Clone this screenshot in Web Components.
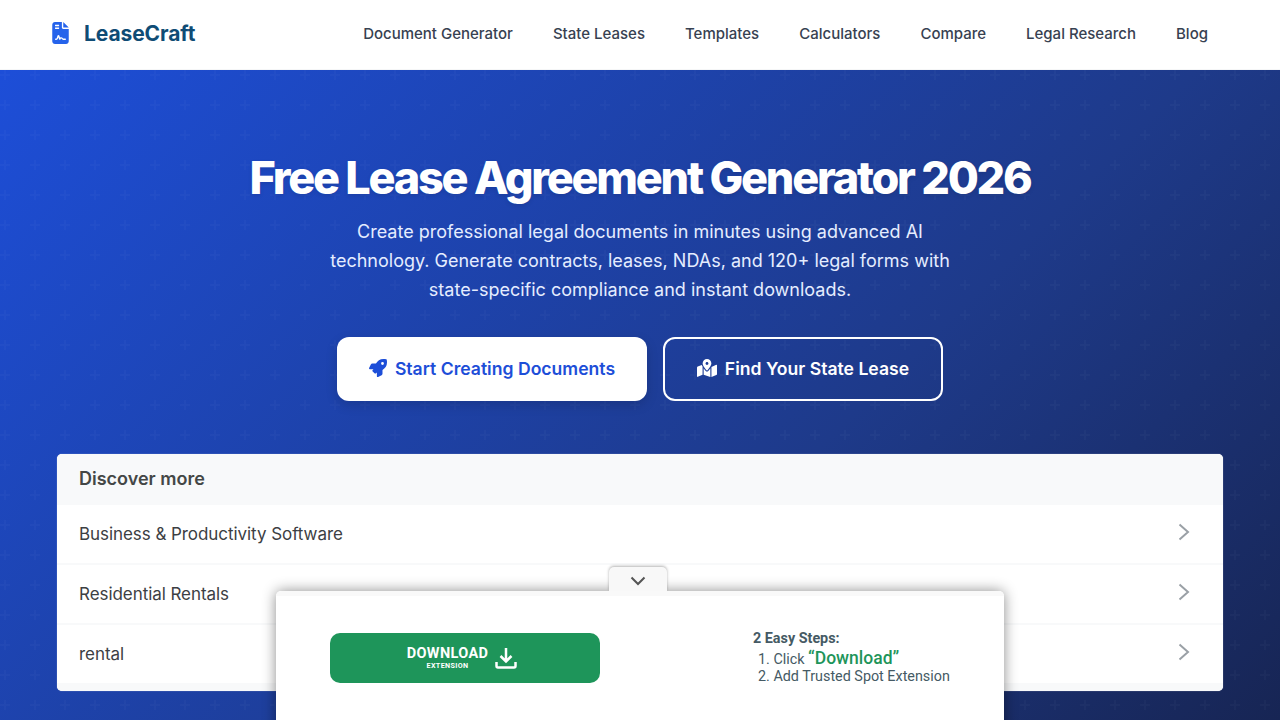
<!DOCTYPE html>
<html lang="en"><head><meta charset="utf-8"><title>LeaseCraft</title>
<style>
html,body{margin:0;padding:0;height:720px;overflow:hidden;background:#fff;font-family:Inter,"Liberation Sans",sans-serif}
</style></head><body>
<site-header></site-header>
<hero-section>
  <ad-list></ad-list>
</hero-section>
<download-widget></download-widget>
<script>
function def(name, html){
  customElements.define(name, class extends HTMLElement{
    constructor(){super();this.attachShadow({mode:'open'}).innerHTML=html;}
  });
}
const plus = encodeURIComponent('<svg xmlns="http://www.w3.org/2000/svg" width="30" height="30"><path d="M5 0v10M0 5h10" stroke="#fff" stroke-opacity=".022" stroke-width="2" fill="none"/></svg>');
def('site-header',`<style>
:host{display:flex;height:70px;box-sizing:border-box;align-items:center;justify-content:space-between;padding:0 52px 3px 52px;background:#fff;border-bottom:1px solid #f5f6f7;font-family:Inter,sans-serif}
.logo{display:flex;align-items:center;gap:15px;font-weight:700;font-size:21px;color:#0f4c75;letter-spacing:-.1px}
.logo span{margin-top:1px}
nav{display:flex;gap:40px;padding-right:20px}
a{font-size:15px;font-weight:500;color:#374151;text-decoration:none}
svg{display:block}
</style>
<div class="logo"><svg width="17" height="22" viewBox="0 0 384 512"><path fill="#2563eb" d="M64 0C28.700 0 0 28.700 0 64V448c0 35.300 28.700 64 64 64H320c35.300 0 64-28.700 64-64V160H256c-17.700 0-32-14.300-32-32V0H64zM256 0V128H384L256 0z"/><path fill="#fff" d="M64 72c0-4.420 3.580-8 8-8h80c4.420 0 8 3.580 8 8v16c0 4.420-3.580 8-8 8H72c-4.420 0-8-3.580-8-8V72zm0 64c0-4.420 3.580-8 8-8h80c4.420 0 8 3.580 8 8v16c0 4.420-3.580 8-8 8H72c-4.420 0-8-3.580-8-8v-16zm192.810 248H304c8.840 0 16 7.160 16 16s-7.160 16-16 16h-47.190c-16.450 0-31.270-9.140-38.640-23.860-2.950-5.920-8.090-6.520-10.170-6.520s-7.220.59-10.020 6.190l-7.670 15.340a15.986 15.986 0 0 1-14.310 8.840c-.38 0-.75-.02-1.140-.05-6.450-.45-12-4.750-14.030-10.890L144 354.590l-10.610 31.880c-5.890 17.660-22.380 29.530-41 29.530H80c-8.840 0-16-7.160-16-16s7.160-16 16-16h12.390c4.830 0 9.110-3.080 10.640-7.660l18.190-54.640c3.300-9.810 12.440-16.410 22.780-16.410s19.480 6.590 22.770 16.410l13.880 41.640c19.770-16.190 54.050-9.700 66 14.160 2.020 4.060 5.960 6.500 10.160 6.500z"/></svg><span>LeaseCraft</span></div>
<nav><a>Document Generator</a><a>State Leases</a><a>Templates</a><a>Calculators</a><a>Compare</a><a>Legal Research</a><a>Blog</a></nav>`);
def('hero-section',`<style>
:host{display:block;height:650px;box-sizing:border-box;padding-top:80px;color:#fff;text-align:center;font-family:Inter,sans-serif;
background:url("data:image/svg+xml,${plus}") 0 0,linear-gradient(135deg,#1d4ed8 0%,#1e3a8a 62%,#172554 100%)}
h1{margin:0 0 11px;font-size:45px;line-height:56px;font-weight:800;letter-spacing:-2.250px;text-shadow:0 2px 4px rgba(0,0,0,.1)}
p{margin:0 auto 33px;width:640px;font-size:18px;line-height:29px;color:#e5edff}
.cta{display:flex;justify-content:center;gap:16px;margin-bottom:53px}
.btn{display:flex;align-items:center;justify-content:center;gap:8px;box-sizing:border-box;height:64px;padding-bottom:2px;border-radius:12px;font-size:17.600px;font-weight:600}
.a{width:310px;background:#fff;color:#1d4ed8;box-shadow:0 4px 12px rgba(0,0,0,.15)}
.b{width:280px;border:2px solid #fff;color:#fff}
svg{display:block}
</style>
<h1>Free Lease Agreement Generator 2026</h1>
<p>Create professional legal documents in minutes using advanced AI technology. Generate contracts, leases, NDAs, and 120+ legal forms with state-specific compliance and instant downloads.</p>
<div class="cta"><div class="btn a"><svg width="18" height="18" viewBox="0 0 512 512"><path fill="#1d4ed8" d="M505.120 19.094c-1.189-5.531-6.658-11-12.207-12.188C460.716 0 435.507 0 410.407 0 307.175 0 245.269 55.203 199.052 128H94.838c-16.348.016-35.557 11.875-42.887 26.484L2.516 253.297A28.400 28.400 0 0 0 0 264a24.009 24.009 0 0 0 24.006 24h103.810l-22.475 22.469c-11.365 11.361-12.996 32.258 0 45.250l50.904 50.906c11.156 11.188 32.156 13.156 45.277 0l22.475-22.469V488a24.009 24.009 0 0 0 24.006 24 28.559 28.559 0 0 0 10.707-2.516l98.728-49.391c14.629-7.297 26.508-26.500 26.508-42.859V312.797c72.598-46.313 128.035-108.406 128.035-211.094C512.075 76.500 512.075 51.297 505.120 19.094zM384.040 168a40 40 0 1 1 40.010-40 40.023 40.023 0 0 1-40.010 40z"/></svg>Start Creating Documents</div>
<div class="btn b"><svg width="20" height="18" viewBox="0 0 576 512"><path fill="#fff" d="M288 0c-69.590 0-126 56.410-126 126 0 56.260 82.350 158.800 113.900 196.020 6.390 7.540 17.820 7.540 24.200 0C331.650 284.800 414 182.260 414 126 414 56.410 357.590 0 288 0zm0 168c-23.200 0-42-18.800-42-42s18.800-42 42-42 42 18.800 42 42-18.800 42-42 42zM20.120 215.950A32.006 32.006 0 0 0 0 245.660v250.320c0 11.320 11.430 19.060 21.940 14.860L160 448V214.920c-8.840-15.980-16.070-31.540-21.250-46.420L20.120 215.950zM288 359.670c-14.070 0-27.380-6.180-36.510-16.960-19.660-23.200-40.570-49.620-59.490-76.720V448l192 64V266c-18.920 27.090-39.820 53.520-59.490 76.720-9.130 10.770-22.440 16.950-36.510 16.950zm266.060-198.510L416 224v288l139.880-55.950A31.996 31.996 0 0 0 576 426.340V176.020c0-11.320-11.430-19.060-21.940-14.860z"/></svg>Find Your State Lease</div></div>
<slot></slot>`);
const chev = '<svg width="12" height="18" viewBox="0 0 12 18" style="margin-bottom:4px"><path d="M1.500 1.500L10 9l-8.500 7.500" fill="none" stroke="#9aa0a6" stroke-width="2"/></svg>';
def('ad-row',`<style>
:host{display:flex;align-items:center;justify-content:space-between;height:60px;box-sizing:border-box;padding:0 33px 0 22px;border-bottom:2px solid #f8f9fa;font-size:17px;color:#3c4043;font-family:Inter,sans-serif;letter-spacing:-.06px}
</style><slot></slot>${chev}`);
def('ad-list',`<style>
:host{display:block;width:1166px;height:237px;margin:0 auto;background:#fff;border-radius:5px;overflow:hidden;text-align:left;box-shadow:0 0 1px rgba(255,255,255,.7);box-sizing:border-box;font-family:Inter,sans-serif}
.h{height:51px;background:#f8f9fa;display:flex;align-items:center;padding:0 0 3px 22px;box-sizing:border-box;font-size:18px;font-weight:600;color:#444746}
.foot{height:7px;background:#f8f9fa}
</style><div class="h">Discover more</div><ad-row>Business &amp; Productivity Software</ad-row><ad-row>Residential Rentals</ad-row><ad-row>rental</ad-row><div class="foot"></div>`);
def('download-widget',`<style>
:host{position:fixed;left:276px;top:591px;width:728px;height:160px;background:#fff;border-radius:5px 5px 0 0;box-shadow:0 0 14px rgba(0,0,0,.45);font-family:Roboto,sans-serif}
.tab{position:absolute;left:333px;top:-24px;width:58px;height:24px;padding-top:4px;box-sizing:border-box;background:#f8f8f8;border-radius:5px 5px 0 0;box-shadow:0 -1px 3px rgba(0,0,0,.3);display:flex;align-items:center;justify-content:center}
.body{display:flex;height:100px;align-items:flex-start;padding:42px 0 0 54px;position:relative;border-radius:5px 5px 0 0;background:linear-gradient(#f9f9f9 0,#f9f9f9 5px,#fff 5px)}
.dl{width:270px;height:50px;background:#1e955a;border-radius:10px;color:#fff;display:flex;align-items:center;justify-content:center;gap:7px;padding-right:6px;box-sizing:border-box}
.t{text-align:center;font-weight:700;font-size:14.500px;line-height:15px;letter-spacing:.35px}
.t small{display:block;font-size:7.200px;line-height:9px}
.steps{margin-left:153px;margin-top:-3px;font-size:14.350px;line-height:18px;color:#455a64}
b{font-weight:700}
.s{padding-left:5px}
.l2{margin-top:-1px}
.l1{margin-top:1px}
.g{color:#1e955a;font-size:17.500px;font-weight:500}
svg{display:block}
</style>
<div class="tab"><svg width="16" height="10" viewBox="0 0 16 10"><path d="M1.500 1.500L8 8l6.500-6.500" fill="none" stroke="#555" stroke-width="2"/></svg></div>
<div class="body"><div class="dl"><div class="t">DOWNLOAD<small>EXTENSION</small></div><svg width="22" height="22" viewBox="0 0 22 22"><path d="M11 1v13M5.500 9L11 14.500 16.500 9M1.500 15v4a1.500 1.500 0 0 0 1.500 1.500h16a1.500 1.500 0 0 0 1.500-1.500v-4" fill="none" stroke="#fff" stroke-width="2.500"/></svg></div>
<div class="steps"><b>2 Easy Steps:</b><div class="s l1">1. Click <span class="g">“Download”</span></div><div class="s l2">2. Add Trusted Spot Extension</div></div></div>`);
</script>
</body></html>
